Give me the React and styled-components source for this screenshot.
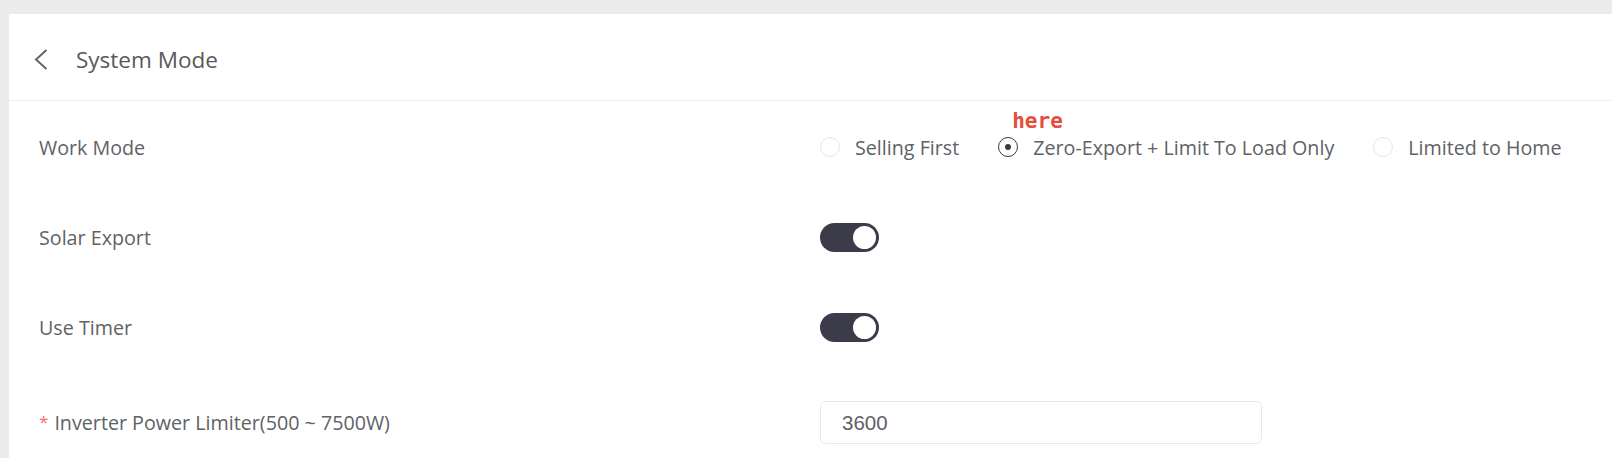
import React, { useState } from 'react';
import styled, { createGlobalStyle } from 'styled-components';

const GlobalStyle = createGlobalStyle`
    html, body {
        margin: 0;
        padding: 0;
        height: 100%;
        background: #ebebeb;
        overflow: hidden;
    }
    body {
        font-family: "Open Sans", "Noto Sans", sans-serif;
    }
`;

const Page = styled.div`
    padding: 14px 0 0 9px;
    box-sizing: border-box;
    height: 100vh;
`;
const Card = styled.div`
    background: #fff;
    height: 100%;
`;
const Header = styled.div`
    display: flex;
    align-items: center;
    box-sizing: border-box;
    height: 87px;
    padding: 4px 0 0 25px;
    border-bottom: 1px solid #efefef;
`;
const BackButton = styled.button`
    display: flex;
    align-items: center;
    border: none;
    background: none;
    padding: 0;
    margin-right: 28px;
    cursor: pointer;
`;
const Title = styled.h1`
    margin: 0;
    font-size: 22.5px;
    font-weight: 400;
    color: #5a5a5a;
`;
const Form = styled.div`
    display: flex;
    flex-direction: column;
    gap: 58px;
    padding: 30px 0 0 30px;
`;
const Row = styled.div`
    display: flex;
    align-items: center;
    min-height: 32px;
`;
const Label = styled.label`
    width: 781px;
    flex-shrink: 0;
    font-size: 19.7px;
    color: #606266;
`;
const Required = styled.span`
    color: #f56c6c;
    font-size: 17px;
    margin-right: 6px;
    vertical-align: 2px;
`;
const RadioGroup = styled.div`
    display: flex;
    align-items: center;
    gap: 39px;
`;
const RadioOption = styled.label`
    position: relative;
    display: flex;
    align-items: center;
    gap: 15px;
    font-size: 19.7px;
    color: #606266;
    cursor: pointer;
`;
const RadioCircle = styled.span`
    position: relative;
    width: 20px;
    height: 20px;
    box-sizing: border-box;
    border-radius: 50%;
    border: ${p => p.$checked ? '1.5px solid #3b3b48' : '1px solid #e6e6e6'};
    background: #fff;
    &::after {
        content: '';
        display: ${p => p.$checked ? 'block' : 'none'};
        position: absolute;
        left: 50%;
        top: 50%;
        width: 6px;
        height: 6px;
        margin: -3px 0 0 -3px;
        border-radius: 50%;
        background: #3b3b48;
    }
`;
const Note = styled.span`
    position: absolute;
    left: 14px;
    top: -25px;
    font-family: "DejaVu Sans Mono", "Liberation Mono", monospace;
    font-weight: 700;
    font-size: 21px;
    color: #e74c3c;
    white-space: nowrap;
`;
const Switch = styled.button`
    position: relative;
    width: 59px;
    height: 29px;
    padding: 0;
    border: none;
    border-radius: 15px;
    background: ${p => p.$on ? '#3b3b4a' : '#dcdfe6'};
    cursor: pointer;
    &::after {
        content: '';
        position: absolute;
        top: 3px;
        left: ${p => p.$on ? '33px' : '3px'};
        width: 23px;
        height: 23px;
        border-radius: 50%;
        background: #fff;
    }
`;
const Input = styled.input`
    width: 442px;
    height: 43px;
    box-sizing: border-box;
    border: 1px solid #e9e9e9;
    border-radius: 5px;
    padding: 0 21px;
    font-family: "Liberation Sans", Arial, sans-serif;
    font-size: 20.5px;
    color: #606266;
    outline: none;
`;

const ChevronLeft = () => (
    <svg width="14" height="21" viewBox="0 0 14 21">
        <polyline points="12.5,1 2,10.5 12.5,20" fill="none" stroke="#666" strokeWidth="2" />
    </svg>
);

const modes = ['Selling First', 'Zero-Export + Limit To Load Only', 'Limited to Home'];

export default function App() {
    const [mode, setMode] = useState(1);
    const [solar, setSolar] = useState(true);
    const [timer, setTimer] = useState(true);
    const [limit, setLimit] = useState('3600');

    return (
        <Page>
            <GlobalStyle />
            <Card>
                <Header>
                    <BackButton><ChevronLeft /></BackButton>
                    <Title>System Mode</Title>
                </Header>
                <Form>
                    <Row>
                        <Label>Work Mode</Label>
                        <RadioGroup>
                            {modes.map((m, i) => (
                                <RadioOption key={m} onClick={() => setMode(i)}>
                                    {i === 1 && <Note>here</Note>}
                                    <RadioCircle $checked={mode === i} />
                                    {m}
                                </RadioOption>
                            ))}
                        </RadioGroup>
                    </Row>
                    <Row>
                        <Label>Solar Export</Label>
                        <Switch $on={solar} onClick={() => setSolar(!solar)} />
                    </Row>
                    <Row>
                        <Label>Use Timer</Label>
                        <Switch $on={timer} onClick={() => setTimer(!timer)} />
                    </Row>
                    <Row>
                        <Label><Required>*</Required>Inverter Power Limiter(500 ~ 7500W)</Label>
                        <Input value={limit} onChange={e => setLimit(e.target.value)} />
                    </Row>
                </Form>
            </Card>
        </Page>
    );
}
